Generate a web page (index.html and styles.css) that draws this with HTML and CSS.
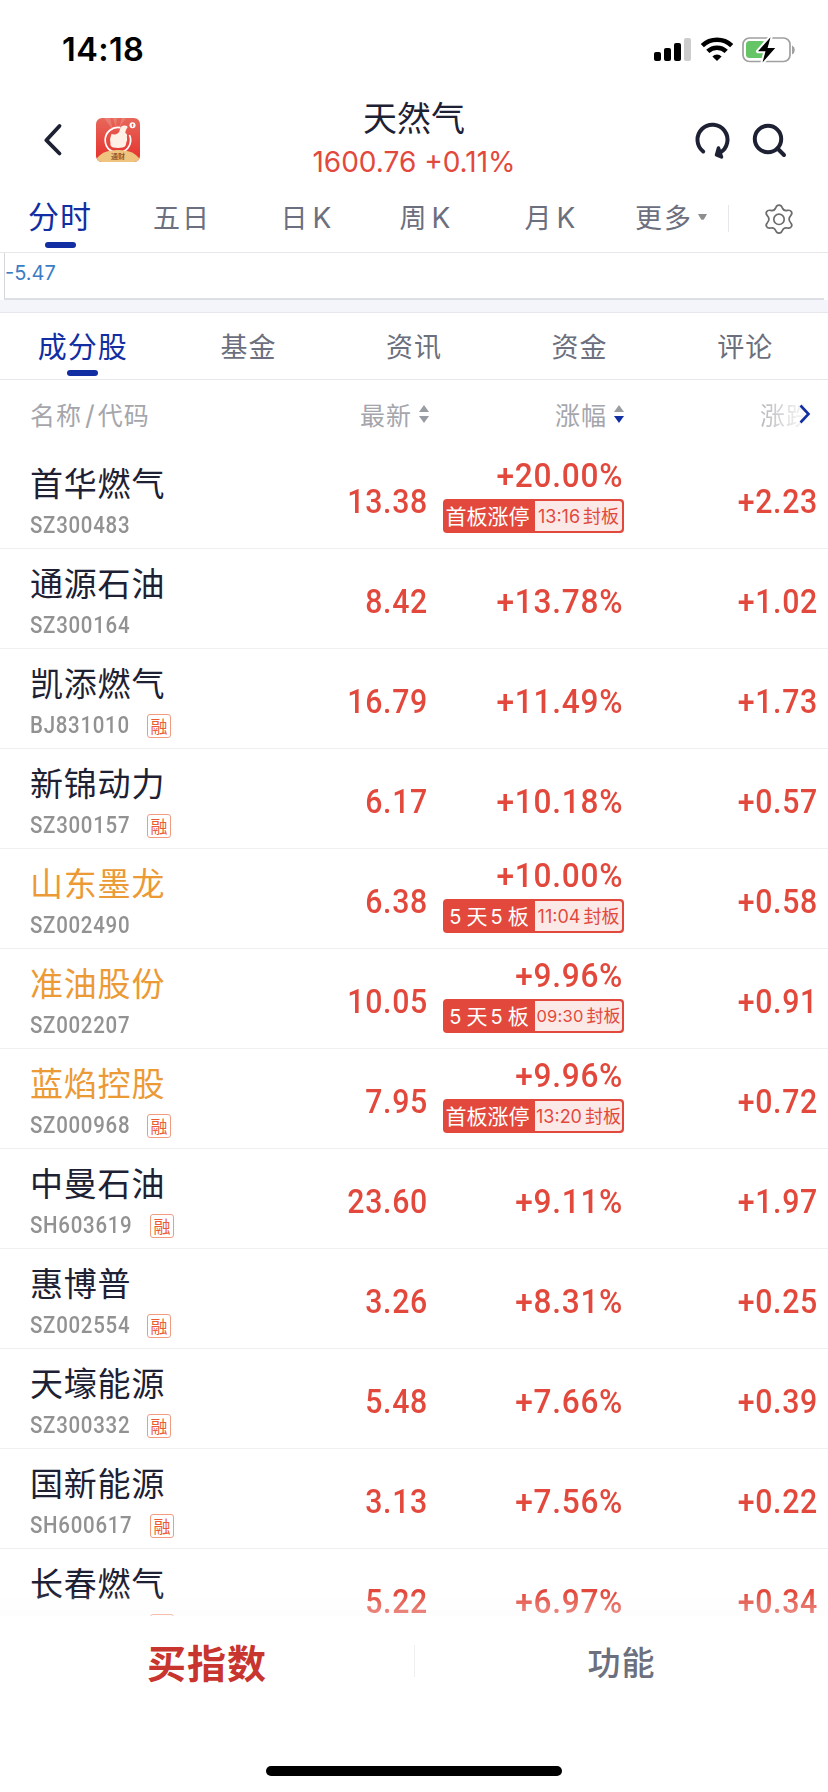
FILE: index.html
```html
<!DOCTYPE html>
<html lang="zh-CN">
<head>
<meta charset="utf-8">
<title>天然气</title>
<link rel="stylesheet" href="styles.css">
</head>
<body>
<div class="app">
  <div class="status">
    <span class="clock">14:18</span>
    <svg class="status-icons" width="144" height="28" viewBox="0 0 144 28">
      <rect x="1" y="15" width="7" height="9" rx="2"/>
      <rect x="11" y="11" width="7" height="13" rx="2"/>
      <rect x="21" y="6" width="7" height="18" rx="2"/>
      <rect x="31" y="1" width="7" height="23" rx="2" fill="#ccc"/>
      <g fill="none" stroke="#000" stroke-width="4.6">
        <path d="M49.3 8.6a21.5 21.5 0 0 1 29.4 0"/>
        <path d="M54.8 14.4a13.3 13.3 0 0 1 18.4 0"/>
      </g>
      <path d="M64 24l-4.6-4.6a6.6 6.6 0 0 1 9.2 0z"/>
      <rect x="90" y="1" width="47" height="23.500" rx="6.500" fill="none" stroke="#a0a0a0" stroke-width="1.700"/>
      <path d="M139 8.500a5 5 0 0 1 0 9z" fill="#a0a0a0"/>
      <rect x="93" y="4" width="19" height="17" rx="3.500" fill="#65c466"/>
      <path d="M117.500 .200L105 14.300h7.500l-3 11.200 12.700-14.500h-7.600z" stroke="#fff" stroke-width="4" stroke-linejoin="round"/>
      <path d="M117.500 .200L105 14.300h7.500l-3 11.200 12.700-14.500h-7.600z"/>
    </svg>
  </div>

  <header class="nav">
    <div class="nav-left">
      <svg width="20" height="34" viewBox="0 0 20 34"><path d="M16.500 3L3.300 17.200 16.500 30.500" fill="none" stroke="#1d2133" stroke-width="3.800" stroke-linecap="round" stroke-linejoin="round"/></svg>
      <div class="logo">
        <svg width="44" height="44" viewBox="0 0 44 44">
          <path d="M17 12L8 0h6zM20 10L17 0h4zM23 10l3-10h4z" fill="#fff" opacity=".16"/>
          <path d="M24.500 9.700A12.700 12.700 0 1 0 33.500 17" fill="none" stroke="#fff" stroke-width="1.700"/>
          <path d="M15.500 16q3.500 1 6-.5 2.200-1.500 2.700-5 1.300-3.300 4-3 3-.3 3.500 1.500-2 2.500-2.500 6 2.300.5 1.700 4 .8 3-.7 6-.2 4-3.700 4.500-4 .8-9.500 0-3-1-2.600-4.500-1-4.500 1.100-9z" fill="#fff1e6"/>
          <circle cx="36.500" cy="7.300" r="3" fill="#fff"/>
          <path d="M36.500 9V6m-1.200 1.200l1.200-1.200 1.200 1.200" fill="none" stroke="#e54840" stroke-width=".800"/>
          <path d="M0 42q5-10 22-10t22 10v2H0z" fill="#eec47f"/>
        </svg>
        <span class="logo-text">通财</span>
      </div>
    </div>
    <div class="nav-title">
      <h1>天然气</h1>
      <p>1600.76 +0.11%</p>
    </div>
    <div class="nav-right">
      <svg width="36" height="38" viewBox="0 0 36 38"><path d="M8.200 29.500A15 15 0 1 1 24.800 30.800" fill="none" stroke="#1d2133" stroke-width="4" stroke-linecap="round"/><path d="M23.500 26l-2 7 5 2z" fill="#1d2133" stroke="#1d2133" stroke-width="3.500" stroke-linejoin="round"/></svg>
      <svg width="36" height="38" viewBox="0 0 36 38"><circle cx="17" cy="17" r="13.200" fill="none" stroke="#1d2133" stroke-width="4"/><path d="M26.500 26.500l6.500 6.500" stroke="#1d2133" stroke-width="4" stroke-linecap="round"/></svg>
    </div>
  </header>

  <nav class="periods">
    <span class="on">分时</span><span>五日</span><span>日<i>K</i></span><span>周<i>K</i></span><span>月<i>K</i></span>
    <span class="more">更多<svg width="9" height="6" viewBox="0 0 9 6"><path d="M0 0h9L6 5.200q-1.500 1.200-3 0z" fill="#8e8e8e"/></svg></span>
    <div class="gear"><svg width="32" height="32" viewBox="0 0 32 32" fill="none" stroke="#6c6c6c" stroke-width="1.700" stroke-linejoin="round"><circle cx="16" cy="16.300" r="5.200"/><path d="M12.800 4.600C13.600 2.300 14.500 2.200 16 2.200s2.400.1 3.200 2.400c1 2.600 2.600 3.400 5.200 2.800 2.500-.6 3.200.1 4 1.400s.9 2.200-.7 3.800c-1.900 2.100-1.900 5.100 0 7.200 1.600 1.600 1.500 2.500.7 3.800s-1.500 2-4 1.400c-2.600-.6-4.200.2-5.200 2.800-.8 2.300-1.700 2.400-3.200 2.400s-2.400-.1-3.200-2.400c-1-2.600-2.600-3.400-5.200-2.800-2.500.6-3.200-.1-4-1.400s-.9-2.200.7-3.800c1.900-2.100 1.900-5.100 0-7.200-1.600-1.600-1.500-2.500-.7-3.800s1.500-2 4-1.400c2.600.6 4.200-.2 5.200-2.800z"/></svg></div>
  </nav>

  <div class="chart"><span>-5.47</span></div>

  <nav class="sections">
    <span class="on">成分股</span><span>基金</span><span>资讯</span><span>资金</span><span>评论</span>
  </nav>

  <div class="cols thead">
    <span class="h-name">名称<b>/</b>代码</span>
    <span class="h-num">最新<svg width="12" height="18" viewBox="0 0 12 18"><path d="M1 7l5-7 5 7z" fill="#9a9ca3"/><path d="M1 11h10l-5 7z" fill="#9a9ca3"/></svg></span>
    <span class="h-num">涨幅<svg width="12" height="18" viewBox="0 0 12 18"><path d="M1 7l5-7 5 7z" fill="#9a9ca3"/><path d="M1 11h10l-5 7z" fill="#112ea2"/></svg></span>
    <span class="h-last"><em>涨跌</em><svg width="12" height="20" viewBox="0 0 12 20"><path d="M1.500 1.500L9.500 10l-8 8.500" fill="none" stroke="#112ea2" stroke-width="2.600"/></svg></span>
  </div>

  <main class="list">
    <div class="cols row"><div><h2>首华燃气</h2><p><span>SZ300483</span></p></div><b>13.38</b><div class="pct"><b>+20.00%</b><div class="tag"><span>首板涨停</span><span><i>13:16</i>封板</span></div></div><b>+2.23</b></div>
    <div class="cols row"><div><h2>通源石油</h2><p><span>SZ300164</span></p></div><b>8.42</b><div class="pct mid"><b>+13.78%</b></div><b>+1.02</b></div>
    <div class="cols row"><div><h2>凯添燃气</h2><p><span>BJ831010</span><u>融</u></p></div><b>16.79</b><div class="pct mid"><b>+11.49%</b></div><b>+1.73</b></div>
    <div class="cols row"><div><h2>新锦动力</h2><p><span>SZ300157</span><u>融</u></p></div><b>6.17</b><div class="pct mid"><b>+10.18%</b></div><b>+0.57</b></div>
    <div class="cols row held"><div><h2>山东墨龙</h2><p><span>SZ002490</span></p></div><b>6.38</b><div class="pct"><b>+10.00%</b><div class="tag"><span><i>5</i>天<i>5</i>板</span><span><i>11:04</i>封板</span></div></div><b>+0.58</b></div>
    <div class="cols row held"><div><h2>准油股份</h2><p><span>SZ002207</span></p></div><b>10.05</b><div class="pct"><b>+9.96%</b><div class="tag"><span><i>5</i>天<i>5</i>板</span><span class="wide"><i>09:30</i>封板</span></div></div><b>+0.91</b></div>
    <div class="cols row held"><div><h2>蓝焰控股</h2><p><span>SZ000968</span><u>融</u></p></div><b>7.95</b><div class="pct"><b>+9.96%</b><div class="tag"><span>首板涨停</span><span><i>13:20</i>封板</span></div></div><b>+0.72</b></div>
    <div class="cols row sh"><div><h2>中曼石油</h2><p><span>SH603619</span><u>融</u></p></div><b>23.60</b><div class="pct mid"><b>+9.11%</b></div><b>+1.97</b></div>
    <div class="cols row"><div><h2>惠博普</h2><p><span>SZ002554</span><u>融</u></p></div><b>3.26</b><div class="pct mid"><b>+8.31%</b></div><b>+0.25</b></div>
    <div class="cols row"><div><h2>天壕能源</h2><p><span>SZ300332</span><u>融</u></p></div><b>5.48</b><div class="pct mid"><b>+7.66%</b></div><b>+0.39</b></div>
    <div class="cols row sh"><div><h2>国新能源</h2><p><span>SH600617</span><u>融</u></p></div><b>3.13</b><div class="pct mid"><b>+7.56%</b></div><b>+0.22</b></div>
    <div class="cols row sh"><div><h2>长春燃气</h2><p><span></span><u></u></p></div><b>5.22</b><div class="pct mid"><b>+6.97%</b></div><b>+0.34</b></div>
  </main>

  <footer class="actions">
    <span class="buy">买指数</span><i class="sep"></i><span class="func">功能</span>
  </footer>
  <div class="home"><div></div></div>
</div>
</body>
</html>
```

FILE: styles.css
```css
* { box-sizing: border-box; }
body { margin: 0; background: #fff; }
h1, h2, p { margin: 0; font-weight: 400; }
i, em { font-style: normal; }
svg { display: block; flex: none; }

.app {
  width: 828px;
  height: 1792px;
  display: flex;
  flex-direction: column;
  overflow: hidden;
  background: #fff;
  color: #1d2133;
  font-family: "Noto Sans CJK SC", sans-serif;
  white-space: nowrap;
}

/* status bar */
.status {
  height: 90px;
  flex: none;
  display: flex;
  justify-content: space-between;
  align-items: flex-start;
  padding: 30px 31px 0 62px;
  color: #000;
}
.clock { font: 600 32.500px/40px Inter, sans-serif; letter-spacing: .4px; }
.status-icons { margin-top: 7px; }

/* title bar */
.nav {
  height: 97px;
  flex: none;
  display: grid;
  grid-template-columns: 250px 1fr 250px;
}
.nav-left { display: flex; align-items: flex-start; gap: 33px; padding: 28px 0 0 43px; }
.nav-left > svg { margin-top: 5px; }
.logo {
  position: relative;
  width: 44px;
  height: 44px;
  border-radius: 6px;
  overflow: hidden;
  background: linear-gradient(#e7675a, #e62f2c);
}
.logo-text {
  position: absolute;
  left: 0;
  right: 0;
  bottom: 1px;
  text-align: center;
  font: 700 7px/9px "Noto Sans CJK SC", sans-serif;
  color: #99592b;
}
.nav-title { text-align: center; padding-top: 1px; }
.nav-title h1 { font-size: 34px; line-height: 52px; }
.nav-title p { font: 400 28px/36px Inter, sans-serif; color: #e2493c; margin-top: 1px; }
.nav-right { display: flex; justify-content: flex-end; gap: 20px; padding: 32px 41px 0 0; }

/* chart periods */
.periods {
  height: 66px;
  flex: none;
  display: grid;
  grid-template-columns: 120px 124px 126px 112px 138px 108px 100px;
  border-bottom: 1px solid #e6e7eb;
  color: #6c6f7d;
  font-size: 27px;
  line-height: 60px;
  text-align: center;
}
.periods > span { letter-spacing: 2px; }
.periods i { font: 400 28px/28px Inter, sans-serif; margin-left: 3px; }
.on { display: flex; flex-direction: column; align-items: center; color: #112ea2; }
.on::after { content: ""; width: 31px; height: 6px; border-radius: 3px; background: #112ea2; flex: none; }
.periods .on { font-size: 31px; line-height: 56px; letter-spacing: 1px; }
.periods .on::after { margin-top: -1px; }
.more { display: flex; align-items: center; height: 60px; padding-left: 15px; gap: 5px; }
.gear {
  height: 27px;
  margin-top: 18px;
  border-left: 1px solid #e6e7eb;
  display: flex;
  align-items: center;
  padding-left: 34px;
}

/* tail of the intraday chart */
.chart {
  height: 60px;
  flex: none;
  padding: 0 4px;
  border-bottom: 1px solid #e6e7eb;
  background: linear-gradient(#fff 47px, #f4f5fa 47px);
}
.chart span {
  display: block;
  height: 47px;
  border-left: 1px solid #d4d8dc;
  border-bottom: 2px solid #dcdfe3;
  font: 400 20px/41px Inter, sans-serif;
  color: #3b7dc4;
}

/* content sections */
.sections {
  height: 67px;
  flex: none;
  display: grid;
  grid-template-columns: repeat(5, 1fr);
  border-bottom: 1px solid #e6e7eb;
  text-align: center;
  color: #6c6f7d;
  font-size: 27px;
  line-height: 66px;
  letter-spacing: 1px;
}
.sections .on { font-size: 29px; line-height: 64px; }
.sections .on::after { margin-top: -7px; }

/* constituents table */
.cols { display: grid; grid-template-columns: 239px 189px 195px 195px; padding-right: 10px; }
.thead {
  height: 69px;
  flex: none;
  align-items: center;
  color: #a5a6ac;
  font-size: 25px;
  line-height: 36px;
  letter-spacing: 1px;
  padding-bottom: 2px;
}
.h-name { padding-left: 30px; }
.h-name b { font: 400 27px Inter, sans-serif; padding: 0 2px 0 3px; }
.h-num { display: flex; justify-content: flex-end; align-items: center; gap: 6px; position: relative; left: 2px; }
.h-last { display: flex; justify-content: flex-end; align-items: center; padding-right: 7px; }
.h-last em {
  width: 51px;
  margin-right: -12px;
  background: linear-gradient(90deg, #b4b5ba, #fff 95%);
  -webkit-background-clip: text;
  background-clip: text;
  color: transparent;
}

.list { height: 1167px; flex: none; overflow: hidden; position: relative; }
.list::after {
  content: "";
  position: absolute;
  left: 0;
  right: 0;
  bottom: 0;
  height: 24px;
  background: linear-gradient(rgba(252, 252, 252, 0), rgba(250, 250, 250, .4));
}
.row { height: 100px; border-bottom: 1px solid #eff0f1; }
.row > div:first-child { padding: 9px 0 0 30px; }
.row h2 { font-size: 33px; line-height: 48px; letter-spacing: .8px; }
.held h2 { color: #eb9a35; }
.row p {
  display: flex;
  align-items: center;
  height: 32px;
  margin-top: 4px;
  color: #929292;
  font: 500 23px/32px Roboto, sans-serif;
}
.row p span { width: 117px; letter-spacing: .8px; transform: scaleX(.89); transform-origin: left; }
.row.sh p span { width: 120px; }
.row u {
  width: 24px;
  height: 24px;
  border: 1px solid #f29b80;
  border-radius: 3px;
  text-align: center;
  text-decoration: none;
  font: 400 17px/21px "Noto Sans CJK SC", sans-serif;
  color: #ec5b33;
}
.row b {
  color: #e2493c;
  font: 500 34px/30px Roboto, sans-serif;
  letter-spacing: .8px;
  text-align: right;
  transform: scaleX(.89);
  transform-origin: right;
  margin: 37px 0 0;
}
.pct { display: flex; flex-direction: column; align-items: flex-end; }
.pct b { margin-top: 11px; transform: scaleX(.93); }
.pct.mid b { margin-top: 37px; }
.tag {
  display: grid;
  grid-template-columns: 92px 89px;
  width: 181px;
  height: 34px;
  margin: 9px -1px 0 0;
  border-radius: 4px;
  background: #e2493c;
  color: #fff;
  font-size: 21px;
  text-align: center;
}
.tag span { line-height: 32px; }
.tag span:first-child { padding-right: 3px; }
.tag i { font: 400 20px Inter, sans-serif; }
.tag span:first-child i { padding: 0 5px 0 3px; }
.tag span:last-child {
  height: 30px;
  margin: 2px 2px 2px 0;
  border-radius: 0 3px 3px 0;
  background: #fbe9e8;
  color: #e2493c;
  font-size: 18px;
  line-height: 28px;
}
.tag span:last-child i { font-size: 18px; margin-right: 3px; }
.tag span.wide:last-child { font-size: 17px; }
.tag span.wide:last-child i { font-size: 16.500px; letter-spacing: .2px; }

/* bottom actions */
.actions {
  height: 92px;
  flex: none;
  display: grid;
  grid-template-columns: 414px 1px 413px;
  align-items: center;
  text-align: center;
  padding-bottom: 2px;
}
.buy { font-size: 39px; font-weight: 700; letter-spacing: 1px; color: #c8352f; }
.func { font-size: 33px; font-weight: 500; letter-spacing: 1px; color: #6c6f7d; }
.sep { height: 32px; background: #eeeff1; }
.home { flex: 1; display: flex; justify-content: center; align-items: flex-end; padding-bottom: 16px; }
.home div { width: 296px; height: 10px; border-radius: 5px; background: #000; }
```
